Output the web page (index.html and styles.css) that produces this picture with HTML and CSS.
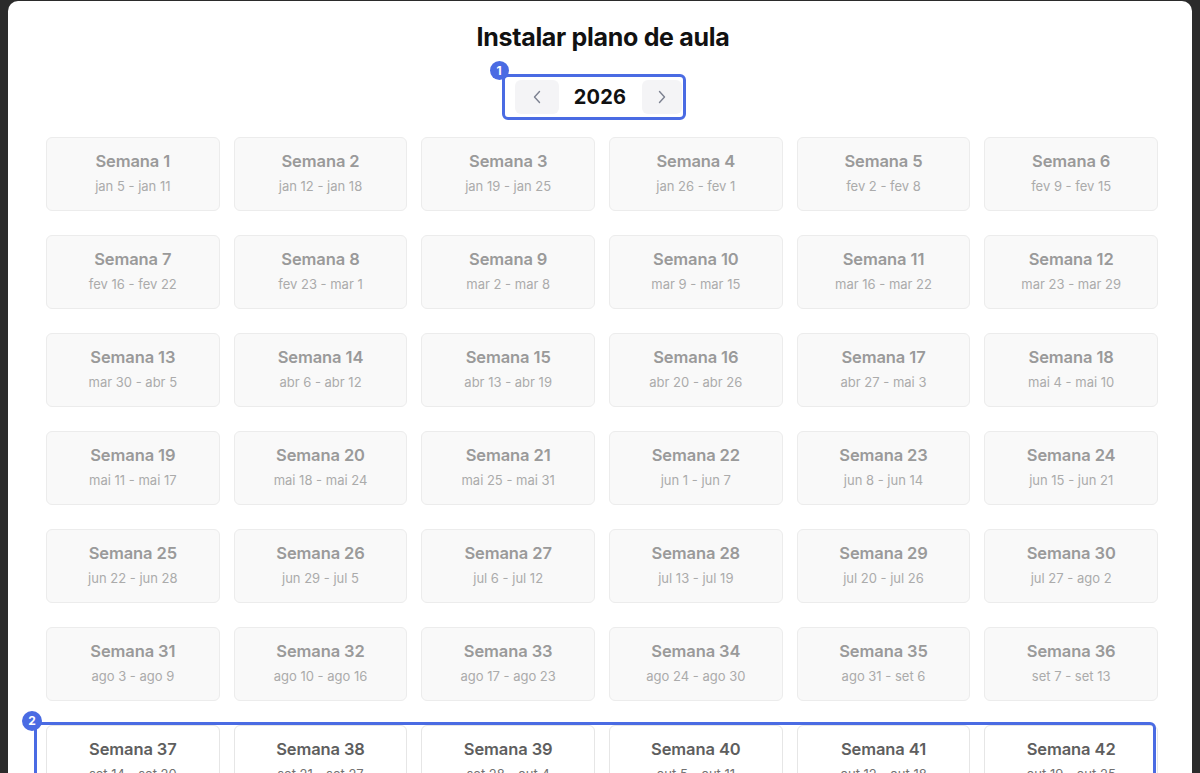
FILE: index.html
```html
<!DOCTYPE html>
<html lang="pt">
<head>
    <meta charset="UTF-8">
    <meta name="viewport" content="width=device-width, initial-scale=1.0">
    <title>Instalar plano de aula</title>
    <link rel="stylesheet" href="styles.css">
</head>
<body>
    <div class="modal">
        <h1 class="modal-title">Instalar plano de aula</h1>

        <div class="year-row">
            <div class="year-picker">
                <span class="marker marker-1">1</span>
                <button class="year-btn year-prev" aria-label="Ano anterior">
                    <svg width="10" height="16" viewBox="0 0 10 16"><path d="M7.5 2.5 L2.5 8 L7.5 13.5" fill="none" stroke="#7c8190" stroke-width="1.4" stroke-linecap="round" stroke-linejoin="round"/></svg>
                </button>
                <span class="year-label">2026</span>
                <button class="year-btn year-next" aria-label="Próximo ano">
                    <svg width="10" height="16" viewBox="0 0 10 16"><path d="M2.5 2.5 L7.5 8 L2.5 13.5" fill="none" stroke="#7c8190" stroke-width="1.4" stroke-linecap="round" stroke-linejoin="round"/></svg>
                </button>
            </div>
        </div>

        <div class="week-grid">
            <div class="week past"><div class="week-name">Semana 1</div><div class="week-dates">jan 5 - jan 11</div></div>
            <div class="week past"><div class="week-name">Semana 2</div><div class="week-dates">jan 12 - jan 18</div></div>
            <div class="week past"><div class="week-name">Semana 3</div><div class="week-dates">jan 19 - jan 25</div></div>
            <div class="week past"><div class="week-name">Semana 4</div><div class="week-dates">jan 26 - fev 1</div></div>
            <div class="week past"><div class="week-name">Semana 5</div><div class="week-dates">fev 2 - fev 8</div></div>
            <div class="week past"><div class="week-name">Semana 6</div><div class="week-dates">fev 9 - fev 15</div></div>

            <div class="week past"><div class="week-name">Semana 7</div><div class="week-dates">fev 16 - fev 22</div></div>
            <div class="week past"><div class="week-name">Semana 8</div><div class="week-dates">fev 23 - mar 1</div></div>
            <div class="week past"><div class="week-name">Semana 9</div><div class="week-dates">mar 2 - mar 8</div></div>
            <div class="week past"><div class="week-name">Semana 10</div><div class="week-dates">mar 9 - mar 15</div></div>
            <div class="week past"><div class="week-name">Semana 11</div><div class="week-dates">mar 16 - mar 22</div></div>
            <div class="week past"><div class="week-name">Semana 12</div><div class="week-dates">mar 23 - mar 29</div></div>

            <div class="week past"><div class="week-name">Semana 13</div><div class="week-dates">mar 30 - abr 5</div></div>
            <div class="week past"><div class="week-name">Semana 14</div><div class="week-dates">abr 6 - abr 12</div></div>
            <div class="week past"><div class="week-name">Semana 15</div><div class="week-dates">abr 13 - abr 19</div></div>
            <div class="week past"><div class="week-name">Semana 16</div><div class="week-dates">abr 20 - abr 26</div></div>
            <div class="week past"><div class="week-name">Semana 17</div><div class="week-dates">abr 27 - mai 3</div></div>
            <div class="week past"><div class="week-name">Semana 18</div><div class="week-dates">mai 4 - mai 10</div></div>

            <div class="week past"><div class="week-name">Semana 19</div><div class="week-dates">mai 11 - mai 17</div></div>
            <div class="week past"><div class="week-name">Semana 20</div><div class="week-dates">mai 18 - mai 24</div></div>
            <div class="week past"><div class="week-name">Semana 21</div><div class="week-dates">mai 25 - mai 31</div></div>
            <div class="week past"><div class="week-name">Semana 22</div><div class="week-dates">jun 1 - jun 7</div></div>
            <div class="week past"><div class="week-name">Semana 23</div><div class="week-dates">jun 8 - jun 14</div></div>
            <div class="week past"><div class="week-name">Semana 24</div><div class="week-dates">jun 15 - jun 21</div></div>

            <div class="week past"><div class="week-name">Semana 25</div><div class="week-dates">jun 22 - jun 28</div></div>
            <div class="week past"><div class="week-name">Semana 26</div><div class="week-dates">jun 29 - jul 5</div></div>
            <div class="week past"><div class="week-name">Semana 27</div><div class="week-dates">jul 6 - jul 12</div></div>
            <div class="week past"><div class="week-name">Semana 28</div><div class="week-dates">jul 13 - jul 19</div></div>
            <div class="week past"><div class="week-name">Semana 29</div><div class="week-dates">jul 20 - jul 26</div></div>
            <div class="week past"><div class="week-name">Semana 30</div><div class="week-dates">jul 27 - ago 2</div></div>

            <div class="week past"><div class="week-name">Semana 31</div><div class="week-dates">ago 3 - ago 9</div></div>
            <div class="week past"><div class="week-name">Semana 32</div><div class="week-dates">ago 10 - ago 16</div></div>
            <div class="week past"><div class="week-name">Semana 33</div><div class="week-dates">ago 17 - ago 23</div></div>
            <div class="week past"><div class="week-name">Semana 34</div><div class="week-dates">ago 24 - ago 30</div></div>
            <div class="week past"><div class="week-name">Semana 35</div><div class="week-dates">ago 31 - set 6</div></div>
            <div class="week past"><div class="week-name">Semana 36</div><div class="week-dates">set 7 - set 13</div></div>

            <div class="week"><div class="week-name">Semana 37</div><div class="week-dates">set 14 - set 20</div></div>
            <div class="week"><div class="week-name">Semana 38</div><div class="week-dates">set 21 - set 27</div></div>
            <div class="week"><div class="week-name">Semana 39</div><div class="week-dates">set 28 - out 4</div></div>
            <div class="week"><div class="week-name">Semana 40</div><div class="week-dates">out 5 - out 11</div></div>
            <div class="week"><div class="week-name">Semana 41</div><div class="week-dates">out 12 - out 18</div></div>
            <div class="week"><div class="week-name">Semana 42</div><div class="week-dates">out 19 - out 25</div></div>
        </div>

        <!-- annotation around the first available row -->
        <div class="highlight-row">
            <span class="marker marker-2">2</span>
        </div>
    </div>
</body>
</html>
```

FILE: styles.css
```css
:root {
    --backdrop: #2b2b2b;
    --accent: #4a6be3;
    --card-border: #ececec;
    --card-bg: #f9f9f9;
    --muted: #9a9a9a;
    --muted-light: #ababab;
    --text: #111111;
}

html, body {
    height: 100%;
}

body {
    margin: 0;
    padding: 0;
    background-color: var(--backdrop);
    font-family: Inter, "Noto Sans", Arial, sans-serif;
    color: var(--text);
    overflow: hidden;
}

/* Modal */
.modal {
    position: relative;
    margin: 1px 8px 0 8px;
    height: 1200px;
    background: #ffffff;
    border-radius: 10px;
    padding: 20px 34px 0 38px;
}

.modal-title {
    margin: 0;
    text-align: center;
    font-size: 25px;
    line-height: 32px;
    font-weight: 700;
    letter-spacing: -0.3px;
    padding-left: 2px;
}

/* Year selector */
.year-row {
    display: flex;
    justify-content: center;
    margin-top: 21px;
    padding-right: 17px;
}

.year-picker {
    position: relative;
    display: flex;
    align-items: center;
    padding: 3px 1px 3px 10px;
    border: 3px solid var(--accent);
    border-radius: 6px;
}

.year-btn {
    width: 44px;
    height: 34px;
    border: none;
    border-radius: 6px;
    background: #f4f4f6;
    display: flex;
    align-items: center;
    justify-content: center;
    padding: 0;
    cursor: pointer;
}

.year-next {
    width: 40px;
}

.year-label {
    width: 83px;
    text-align: center;
    font-size: 20px;
    font-weight: 700;
    letter-spacing: 0.2px;
}

/* Markers */
.marker {
    position: absolute;
    width: 19px;
    height: 19px;
    border-radius: 50%;
    background: var(--accent);
    color: #ffffff;
    font-size: 12px;
    font-weight: 700;
    line-height: 19px;
    text-align: center;
}

.marker-1 {
    top: -16px;
    left: -15px;
}

.marker-2 {
    top: -14px;
    left: -15px;
    width: 20px;
    height: 20px;
    line-height: 20px;
}

/* Week grid */
.week-grid {
    display: grid;
    grid-template-columns: repeat(6, 1fr);
    column-gap: 14px;
    row-gap: 24px;
    margin-top: 17px;
}

.week {
    height: 74px;
    box-sizing: border-box;
    border: 1px solid #e6e6e6;
    border-radius: 6px;
    background: #ffffff;
    display: flex;
    flex-direction: column;
    align-items: center;
    justify-content: center;
    gap: 7px;
    padding-bottom: 4px;
    cursor: pointer;
}

.week-name {
    font-size: 16.5px;
    font-weight: 600;
    letter-spacing: -0.1px;
    color: #5e5e5e;
}

.week-dates {
    font-size: 13px;
    color: #727272;
}

.week.past {
    background: var(--card-bg);
    border-color: var(--card-border);
    cursor: default;
}

.week.past .week-name {
    color: var(--muted);
}

.week.past .week-dates {
    color: var(--muted-light);
}

.highlight-row {
    position: absolute;
    top: 721px;
    left: 26px;
    width: 1122px;
    height: 200px;
    box-sizing: border-box;
    border: 3px solid var(--accent);
    border-radius: 6px;
    pointer-events: none;
}
```
